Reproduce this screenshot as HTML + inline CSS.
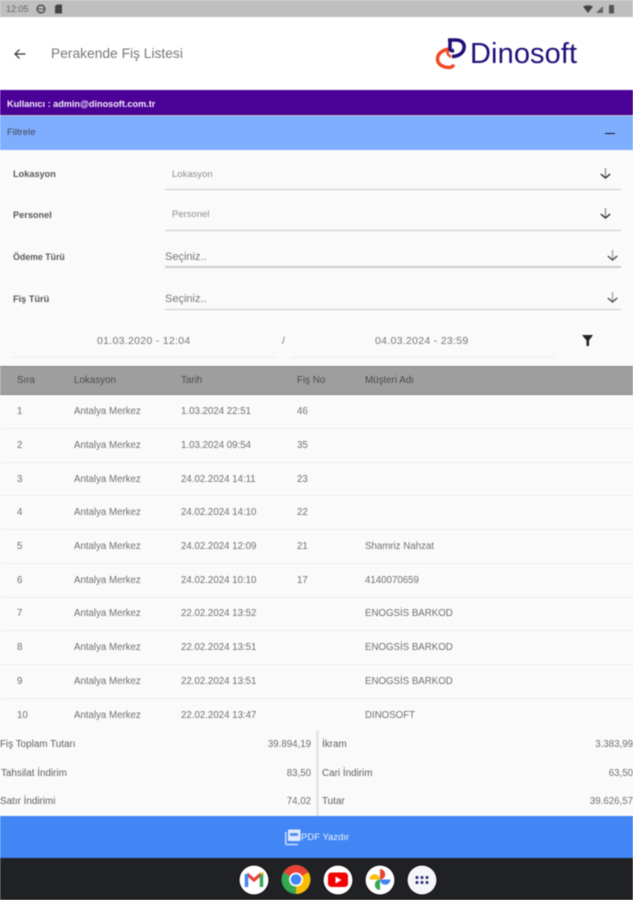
<!DOCTYPE html>
<html><head><meta charset="utf-8">
<style>
html,body{margin:0;padding:0;width:633px;height:900px;overflow:hidden;background:#fafafa;font-family:"Liberation Sans",sans-serif}
.a{position:absolute;white-space:nowrap;line-height:14px;height:14px}
.b{position:absolute}
.t{font-size:9.7px;color:#707070;margin-top:1px}
.l{font-size:9.9px;color:#5e5e5e;margin-top:1px}
.r{text-align:right}
.f{font-size:9.2px;color:#222;font-weight:bold;opacity:.75}
.h{font-size:9.8px;color:#4c4c4c;margin-top:1px}
.s{position:absolute;left:0;width:633px;height:1px;background:#ececec}
.u{position:absolute;left:165px;width:456px;height:1.5px;background:#ccc}
svg{position:absolute;overflow:visible}
#root{position:absolute;left:0;top:0;width:633px;height:900px;filter:blur(.5px);overflow:hidden}
</style></head><body><div id="root">
<div class="b" style="left:0;top:0;width:633px;height:17px;background:#bfbfbf"></div>
<div class="a" style="left:6px;top:2px;font-size:9px;color:#666">12:05</div>
<svg style="left:36px;top:4px" width="10" height="10"><circle cx="5" cy="5" r="3.8" fill="none" stroke="#555" stroke-width="1.6"/><path d="M2 5h6" stroke="#555"/></svg>
<svg style="left:54px;top:4px" width="9" height="10"><path d="M1 2l2-1.500h5v9h-7z" fill="#444"/></svg>
<svg style="left:583px;top:5px" width="32" height="9"><path d="M0 1.500Q5-1 10 1.500L5 8z" fill="#444"/><path d="M13 8l7-7v7z" fill="#666"/><rect x="26" y="0" width="5" height="8.500" fill="#555"/></svg>
<div class="b" style="left:0;top:17px;width:633px;height:73px;background:#fff"></div>
<svg style="left:13px;top:47px" width="14" height="14" viewBox="0 0 14 14"><path d="M12.500 7H2M6.500 2.500L2 7l4.500 4.500" fill="none" stroke="#333" stroke-width="1.200"/></svg>
<div class="a" style="left:51px;top:47px;font-size:13.800px;color:#777">Perakende Fiş Listesi</div>
<svg style="left:0;top:0" width="633" height="90" viewBox="0 0 633 90">
<path d="M449 49c-7 1-11.500 5-11.500 10 0 5 5 8.500 11.500 8.500 2.500 0 4-1 4.500-3" fill="none" stroke="#ef4a23" stroke-width="3.500"/>
<path d="M451 57c-3-2-5-4-2-7.500" fill="none" stroke="#ef4a23" stroke-width="2.500"/>
<path d="M448 40h8c6 0 9 4 8 8.500-1 5-6 8-12 8" fill="none" stroke="#1f0f78" stroke-width="3.500"/>
<path d="M450 40v8c0 3 2 3 4 2.500" fill="none" stroke="#1f0f78" stroke-width="3.500"/>
</svg>
<div class="a" style="left:470px;top:38px;height:32px;line-height:32px;font-size:29px;color:#20107a;letter-spacing:.1px">Dinosoft</div>
<div class="b" style="left:0;top:90px;width:633px;height:25px;background:#4b0096;box-shadow:0 1px 2px rgba(0,0,0,.35)"></div>
<div class="a" style="left:7px;top:97px;font-size:9.130px;font-weight:bold;color:#f4f0fa">Kullanıcı : admin@dinosoft.com.tr</div>
<div class="b" style="left:0;top:116px;width:633px;height:34px;background:#80aeff"></div>
<div class="a" style="left:7px;top:126px;font-size:9.500px;color:#445">Filtrele</div>
<div class="b" style="left:605px;top:132.500px;width:10px;height:1px;background:#112"></div>
<div class="a f" style="left:13px;top:167px">Lokasyon</div>
<div class="a f" style="left:13px;top:208px">Personel</div>
<div class="a f" style="left:13px;top:250px;font-size:8.800px">Ödeme Türü</div>
<div class="a f" style="left:13px;top:292px">Fiş Türü</div>
<div class="a" style="left:172px;top:167.500px;font-size:9.500px;color:#909090">Lokasyon</div>
<div class="a" style="left:172px;top:208px;font-size:9.500px;color:#909090">Personel</div>
<div class="a" style="left:165px;top:250px;font-size:11px;color:#777">Seçiniz..</div>
<div class="a" style="left:165px;top:292px;font-size:11px;color:#777">Seçiniz..</div>
<div class="u" style="top:188.500px"></div>
<div class="u" style="top:229.500px"></div>
<div class="u" style="top:266px"></div>
<div class="u" style="top:308.500px"></div>
<svg style="left:600px;top:168px" width="11" height="11" viewBox="0 0 11 11"><path d="M5.500 0V9" stroke="#888" stroke-width="1.200"/><path d="M.8 6L5.500 10 10.200 6" fill="none" stroke="#222" stroke-width="1.300"/></svg>
<svg style="left:600px;top:208px" width="11" height="11" viewBox="0 0 11 11"><path d="M5.500 0V9" stroke="#888" stroke-width="1.200"/><path d="M.8 6L5.500 10 10.200 6" fill="none" stroke="#222" stroke-width="1.300"/></svg>
<svg style="left:607px;top:250px" width="11" height="11" viewBox="0 0 11 11"><path d="M5.500 0V9" stroke="#999" stroke-width="1.200"/><path d="M.8 6L5.500 10 10.200 6" fill="none" stroke="#444" stroke-width="1.300"/></svg>
<svg style="left:607px;top:292px" width="11" height="11" viewBox="0 0 11 11"><path d="M5.500 0V9" stroke="#999" stroke-width="1.200"/><path d="M.8 6L5.500 10 10.200 6" fill="none" stroke="#444" stroke-width="1.300"/></svg>
<div class="a" style="left:97px;top:334px;font-size:10.500px;color:#777;letter-spacing:.3px">01.03.2020 - 12:04</div>
<div class="a" style="left:282px;top:334px;font-size:10.500px;color:#777">/</div>
<div class="a" style="left:375px;top:334px;font-size:10.500px;color:#777;letter-spacing:.3px">04.03.2024 - 23:59</div>
<div class="b" style="left:12px;top:357px;width:264px;height:1px;background:#eee"></div>
<div class="b" style="left:291px;top:357px;width:264px;height:1px;background:#eee"></div>
<svg style="left:581px;top:334px" width="13" height="13" viewBox="0 0 13 13"><path d="M1 1h11L8 6.500V12H5.500V6.500z" fill="#222"/></svg>
<div class="b" style="left:0;top:366px;width:633px;height:29px;background:#9e9e9e;border-top:1px solid #858585;border-bottom:1px solid #858585;box-sizing:border-box"></div>
<div class="a h" style="left:17px;top:373px">Sıra</div>
<div class="a h" style="left:74px;top:373px">Lokasyon</div>
<div class="a h" style="left:181px;top:373px">Tarih</div>
<div class="a h" style="left:297px;top:373px">Fiş No</div>
<div class="a h" style="left:365px;top:373px">Müşteri Adı</div>

<div class="s" style="top:428px"></div>
<div class="s" style="top:461.500px"></div>
<div class="s" style="top:495px"></div>
<div class="s" style="top:529px"></div>
<div class="s" style="top:563px"></div>
<div class="s" style="top:596.500px"></div>
<div class="s" style="top:630px"></div>
<div class="s" style="top:664px"></div>
<div class="s" style="top:698px"></div>

<div class="a t" style="left:17px;top:404px">1</div><div class="a t" style="left:74px;top:404px">Antalya Merkez</div><div class="a t" style="left:181px;top:404px">1.03.2024 22:51</div><div class="a t" style="left:297px;top:404px">46</div>
<div class="a t" style="left:17px;top:438px">2</div><div class="a t" style="left:74px;top:438px">Antalya Merkez</div><div class="a t" style="left:181px;top:438px">1.03.2024 09:54</div><div class="a t" style="left:297px;top:438px">35</div>
<div class="a t" style="left:17px;top:471.500px">3</div><div class="a t" style="left:74px;top:471.500px">Antalya Merkez</div><div class="a t" style="left:181px;top:471.500px">24.02.2024 14:11</div><div class="a t" style="left:297px;top:471.500px">23</div>
<div class="a t" style="left:17px;top:505px">4</div><div class="a t" style="left:74px;top:505px">Antalya Merkez</div><div class="a t" style="left:181px;top:505px">24.02.2024 14:10</div><div class="a t" style="left:297px;top:505px">22</div>
<div class="a t" style="left:17px;top:539px">5</div><div class="a t" style="left:74px;top:539px">Antalya Merkez</div><div class="a t" style="left:181px;top:539px">24.02.2024 12:09</div><div class="a t" style="left:297px;top:539px">21</div><div class="a t" style="left:365px;top:539px">Shamriz Nahzat</div>
<div class="a t" style="left:17px;top:573px">6</div><div class="a t" style="left:74px;top:573px">Antalya Merkez</div><div class="a t" style="left:181px;top:573px">24.02.2024 10:10</div><div class="a t" style="left:297px;top:573px">17</div><div class="a t" style="left:365px;top:573px">4140070659</div>
<div class="a t" style="left:17px;top:606px">7</div><div class="a t" style="left:74px;top:606px">Antalya Merkez</div><div class="a t" style="left:181px;top:606px">22.02.2024 13:52</div><div class="a t" style="left:365px;top:606px">ENOGSİS BARKOD</div>
<div class="a t" style="left:17px;top:640px">8</div><div class="a t" style="left:74px;top:640px">Antalya Merkez</div><div class="a t" style="left:181px;top:640px">22.02.2024 13:51</div><div class="a t" style="left:365px;top:640px">ENOGSİS BARKOD</div>
<div class="a t" style="left:17px;top:674px">9</div><div class="a t" style="left:74px;top:674px">Antalya Merkez</div><div class="a t" style="left:181px;top:674px">22.02.2024 13:51</div><div class="a t" style="left:365px;top:674px">ENOGSİS BARKOD</div>
<div class="a t" style="left:17px;top:708px">10</div><div class="a t" style="left:74px;top:708px">Antalya Merkez</div><div class="a t" style="left:181px;top:708px">22.02.2024 13:47</div><div class="a t" style="left:365px;top:708px">DINOSOFT</div>

<div class="b" style="left:316px;top:730px;width:3px;height:86px;background:#e6e6e6"></div>
<div class="a l" style="left:0;top:737px">Fiş Toplam Tutarı</div>
<div class="a l" style="left:1px;top:765.500px">Tahsilat İndirim</div>
<div class="a l" style="left:0;top:794px">Satır İndirimi</div>
<div class="a t r" style="left:211px;width:100px;top:737px">39.894,19</div>
<div class="a t r" style="left:211px;width:100px;top:765.500px">83,50</div>
<div class="a t r" style="left:211px;width:100px;top:794px">74,02</div>
<div class="a l" style="left:322px;top:737px">İkram</div>
<div class="a l" style="left:322px;top:765.500px">Cari İndirim</div>
<div class="a l" style="left:322px;top:794px">Tutar</div>
<div class="a t r" style="left:533px;width:100px;top:737px">3.383,99</div>
<div class="a t r" style="left:533px;width:100px;top:765.500px">63,50</div>
<div class="a t r" style="left:533px;width:100px;top:794px">39.626,57</div>

<div class="b" style="left:0;top:816px;width:633px;height:42px;background:#4285f4"></div>
<svg style="left:285px;top:829px" width="16" height="16" viewBox="0 0 16 16"><rect x="3" y="0.500" width="12.500" height="11.500" rx="1" fill="#dfeaff"/><path d="M.8 3v11.500c0 .6.5 1 1 1H13" fill="none" stroke="#dfeaff" stroke-width="1.300"/><rect x="5" y="4" width="8" height="3" fill="#5b8ff0"/></svg>
<div class="a" style="left:301px;top:830.500px;font-size:9.500px;color:#eef3ff">PDF Yazdır</div>
<div class="b" style="left:0;top:858px;width:633px;height:42px;background:#202124"></div>

<svg style="left:0;top:858px" width="633" height="42" viewBox="0 858 633 42">
<g stroke="#000" stroke-width="1.500" paint-order="stroke">
<circle cx="254" cy="880" r="14.500" fill="#fff"/>
<circle cx="338" cy="880" r="14.500" fill="#fff"/>
<circle cx="380" cy="880" r="14.500" fill="#fff"/>
<circle cx="422" cy="880" r="14.500" fill="#f5f6fb"/>
</g>
<path d="M247 874l7 6 7-6" fill="none" stroke="#ea4335" stroke-width="3.200"/>
<path d="M246.500 887v-13" stroke="#4285f4" stroke-width="3.500"/><path d="M261.500 887v-13" stroke="#34a853" stroke-width="3.500"/><path d="M260 873l3.500-1v3z" fill="#fbbc04"/>
<circle cx="296" cy="879.500" r="14.500" fill="#34a853"/>
<path d="M296 879.500L283.500 872.300A14.500 14.500 0 0 1 308.500 872.300Z" fill="#ea4335"/>
<path d="M296 879.500L308.500 872.300A14.500 14.500 0 0 1 296 894Z" fill="#fbbc04"/>
<circle cx="296" cy="879.500" r="7" fill="#fff"/><circle cx="296" cy="879.500" r="5.300" fill="#4285f4"/>
<rect x="328" y="872.500" width="20" height="14.500" rx="3.500" fill="#f40000"/><path d="M335.500 876.500l6 3.500-6 3.500z" fill="#fff"/>
<path d="M380 879.500v-10.500a5 5 0 0 1 0 10.500z" fill="#ea4335"/>
<path d="M380 879.500h10.500a5 5 0 0 1-10.500 0z" fill="#4285f4"/>
<path d="M380 879.500v10.500a5 5 0 0 1 0-10.500z" fill="#34a853"/>
<path d="M380 879.500h-10.500a5 5 0 0 1 10.500 0z" fill="#fbbc04"/>
<g fill="#2a2a70"><circle cx="417" cy="877.500" r="1.500"/><circle cx="422" cy="877.500" r="1.500"/><circle cx="427" cy="877.500" r="1.500"/><circle cx="417" cy="882.500" r="1.500"/><circle cx="422" cy="882.500" r="1.500"/><circle cx="427" cy="882.500" r="1.500"/></g>
</svg>
</div></body></html>
